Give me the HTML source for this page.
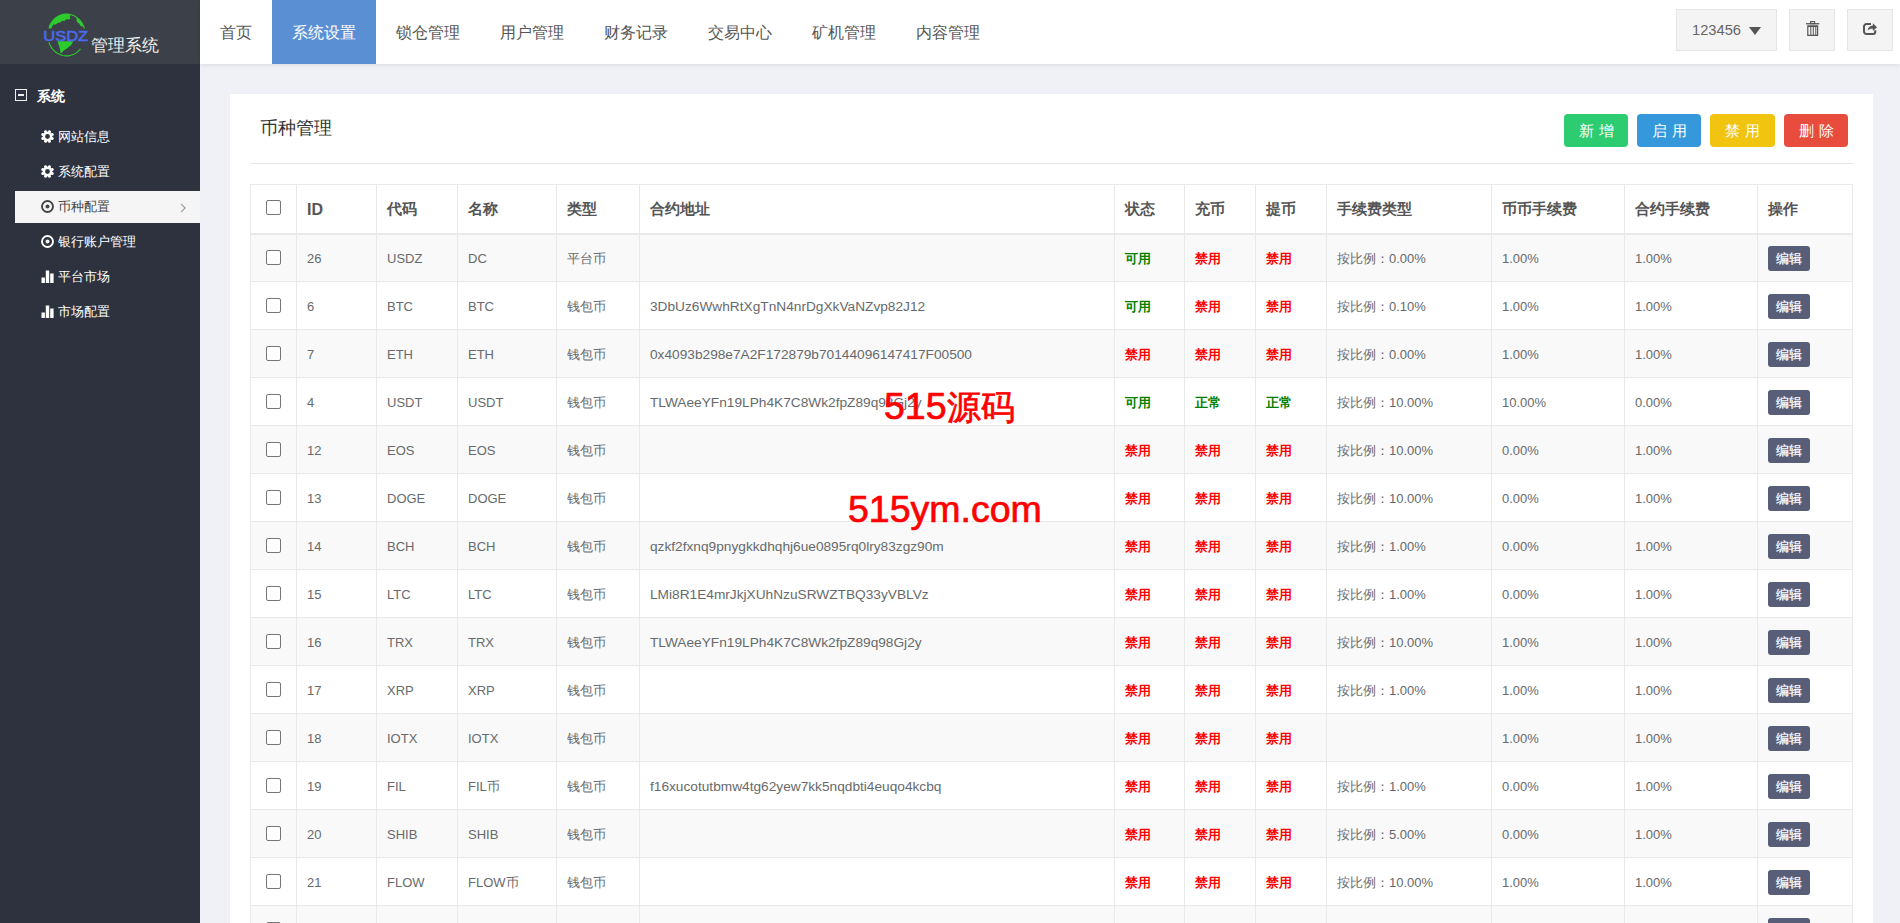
<!DOCTYPE html>
<html><head><meta charset="utf-8">
<style>
*{box-sizing:border-box;margin:0;padding:0}
html,body{width:1900px;height:923px;overflow:hidden}
body{font-family:"Liberation Sans",sans-serif;background:#f0f1f6;color:#676a6c;position:relative}
.logo{position:absolute;left:0;top:0;width:200px;height:64px;background:#3b4049}
.side{position:absolute;left:0;top:64px;width:200px;height:859px;background:#2d323e}
.nav{position:absolute;left:200px;top:0;width:1700px;height:64px;background:#fff;box-shadow:0 1px 5px rgba(0,0,0,.09)}
.nav a{position:absolute;top:0;height:64px;line-height:66px;font-size:16px;color:#555;text-decoration:none;text-align:center}
.nav a.on{background:#5b8fd4;color:#fff}
.card{position:absolute;left:230px;top:94px;width:1643px;height:900px;background:#fff}
.title{position:absolute;left:30px;top:22px;font-size:18px;color:#333}
.sep{position:absolute;left:20px;top:69px;width:1603px;height:1px;background:#e7eaec}
.btn{position:absolute;top:20px;height:33px;width:64px;border-radius:4px;color:#fff;font-size:15px;line-height:33px;text-align:center;letter-spacing:5px;text-indent:5px}
table{position:absolute;left:20px;top:90px;border-collapse:collapse;width:1602px;table-layout:fixed}
td,th{border:1px solid #e9e9e9;height:48px;padding:2px 10px 0;font-size:13px;text-align:left;white-space:nowrap;overflow:hidden}
th{height:49px;border-bottom:2px solid #e9e9e9;font-weight:bold;font-size:15px;color:#555}
tbody tr:nth-child(odd) td{background:#f9f9f9}
.cb{display:inline-block;width:15px;height:15px;border:1px solid #767676;border-radius:2px;vertical-align:middle;background:#fff;position:relative;top:-2px}
th .cb{top:-4px}
td.c0,th.c0{padding:2px 0 0 15px}
b.g{color:#008000;font-size:13px}
b.r{color:#f00;font-size:13px}
.eb{display:inline-block;width:42px;height:25px;line-height:27px;text-align:center;background:#585d78;color:#fff;border-radius:3px;font-size:12.5px;-webkit-text-stroke:0.25px #fff;position:relative;top:0px}
.grp{position:absolute;left:15px;top:24px;height:18px;color:#fff;font-size:14px}
.grp b{position:absolute;left:22px;top:0;white-space:nowrap}
.minus{position:absolute;left:0;top:1px;width:12px;height:12px;border:1.6px solid #eee}
.minus:after{content:"";position:absolute;left:1.5px;top:3.8px;width:6px;height:2px;background:#eee}
.it{position:absolute;left:15px;width:185px;height:32px;line-height:32px;color:#fff;font-size:13px;padding-left:43px;white-space:nowrap}
.it.on{background:#f5f5f5;color:#444}
.si{position:absolute;left:26px;top:9px}
.chev{position:absolute;left:165px;top:12px}
.user{position:absolute;left:1676px;top:9px;width:101px;height:42px;background:#f4f4f4;border:1px solid #e5e5e5;font-size:14.7px;color:#666;line-height:40px;padding-left:15px}
.tri{position:absolute;left:72px;top:17px;border-left:6px solid transparent;border-right:6px solid transparent;border-top:8px solid #555}
.ib{position:absolute;top:9px;width:46px;height:42px;background:#f4f4f4;border:1px solid #e5e5e5}
.wm1{position:absolute;left:884px;top:386px;font-size:37.5px;color:#f00;-webkit-text-stroke:0.7px #f00;white-space:nowrap;line-height:40px}
.wm2{position:absolute;left:848px;top:489px;font-size:37.5px;color:#f00;-webkit-text-stroke:0.7px #f00;white-space:nowrap;line-height:40px}
td.ad{font-size:13.7px}
</style></head><body>
<div class="logo">
<svg style="position:absolute;left:0;top:0" width="200" height="64" viewBox="0 0 200 64">
<polyline points="49.07,27.17 49.87,25.24 50.85,23.41 51.99,21.71 53.28,20.14 54.71,18.72 56.26,17.47 57.92,16.41 59.66,15.53 61.48,14.86 63.34,14.40 65.24,14.15 67.16,14.11 69.06,14.30 70.94,14.69 72.78,15.30 74.54,16.11 76.23,17.12 77.81,18.31 79.28,19.67 80.62,21.20 81.81,22.86 82.84,24.66 83.70,26.55 84.38,28.54" fill="none" stroke="#2ecb2e" stroke-width="1.1"/>
<polyline points="48.83,42.15 49.45,43.81 50.19,45.40 51.05,46.91 52.03,48.34 53.11,49.67 54.29,50.89 55.56,52.00 56.91,52.98 58.33,53.82 59.81,54.53 61.34,55.10 62.91,55.52 64.51,55.78 66.12,55.90 67.73,55.86 69.33,55.66 70.92,55.32 72.47,54.82 73.97,54.18 75.42,53.40 76.81,52.48 78.12,51.43 79.34,50.26 80.47,48.98" fill="none" stroke="#2ecb2e" stroke-width="1.1"/>
<g fill="#2ecb2e"><polygon points="48.62,28.54 49.09,27.10 49.66,25.71 50.32,24.36 51.06,23.07 51.89,21.85 52.80,20.69 53.77,19.62 54.82,18.62 55.93,17.71 57.10,16.90 58.32,16.18 59.58,15.57 60.88,15.06 62.21,14.65 63.56,14.36 64.93,14.17 66.30,14.10 67.68,14.14 69.05,14.29 70.41,14.56 69.80,17.20 70.60,18.80 68.60,19.60 66.40,19.20 64.40,20.90 62.20,20.70 60.20,22.40 57.80,22.90 55.60,24.60 53.60,24.50 52.20,26.20 51.30,28.60"/><polygon points="76.46,17.28 77.62,18.15 78.71,19.11 79.74,20.16 80.69,21.29 81.56,22.50 82.36,23.77 83.06,25.11 83.67,26.50 81.80,26.40 80.20,25.60 79.20,23.60 77.40,22.40 76.60,20.40"/><polygon points="57.40,41.30 73.20,41.30 71.60,44.60 67.60,48.10 63.80,50.40 62.00,52.60 60.50,53.40 60.10,49.60 58.90,45.60"/></g>
<text x="43.3" y="41" font-family="Liberation Sans" font-size="14.6" fill="#4a6af0" stroke="#4a6af0" stroke-width="0.55" textLength="44.8" lengthAdjust="spacingAndGlyphs">USDZ</text>
</svg>
<div style="position:absolute;left:90.5px;top:35.5px;font-size:16.6px;color:#f0f0f0;line-height:20px">管理系统</div>
</div>
<div class="side">
<div class="grp"><i class="minus"></i><b>系统</b></div>
<div class="it" style="top:57px"><svg class="si" width="13" height="13" viewBox="0 0 13 13"><path fill-rule="evenodd" fill="currentColor" d="M11.20 6.65 L12.94 7.96 L12.08 10.02 L9.93 9.71 L9.71 9.93 L10.02 12.08 L7.96 12.94 L6.65 11.20 L6.35 11.20 L5.04 12.94 L2.98 12.08 L3.29 9.93 L3.07 9.71 L0.92 10.02 L0.06 7.96 L1.80 6.65 L1.80 6.35 L0.06 5.04 L0.92 2.98 L3.07 3.29 L3.29 3.07 L2.98 0.92 L5.04 0.06 L6.35 1.80 L6.65 1.80 L7.96 0.06 L10.02 0.92 L9.71 3.07 L9.93 3.29 L12.08 2.98 L12.94 5.04 L11.20 6.35 Z M4.10 6.50 a2.4 2.4 0 1 0 4.8 0 a2.4 2.4 0 1 0 -4.8 0 Z"/></svg>网站信息</div>
<div class="it" style="top:92px"><svg class="si" width="13" height="13" viewBox="0 0 13 13"><path fill-rule="evenodd" fill="currentColor" d="M11.20 6.65 L12.94 7.96 L12.08 10.02 L9.93 9.71 L9.71 9.93 L10.02 12.08 L7.96 12.94 L6.65 11.20 L6.35 11.20 L5.04 12.94 L2.98 12.08 L3.29 9.93 L3.07 9.71 L0.92 10.02 L0.06 7.96 L1.80 6.65 L1.80 6.35 L0.06 5.04 L0.92 2.98 L3.07 3.29 L3.29 3.07 L2.98 0.92 L5.04 0.06 L6.35 1.80 L6.65 1.80 L7.96 0.06 L10.02 0.92 L9.71 3.07 L9.93 3.29 L12.08 2.98 L12.94 5.04 L11.20 6.35 Z M4.10 6.50 a2.4 2.4 0 1 0 4.8 0 a2.4 2.4 0 1 0 -4.8 0 Z"/></svg>系统配置</div>
<div class="it on" style="top:127px"><svg class="si" width="13" height="13" viewBox="0 0 13 13"><circle cx="6.5" cy="6.5" r="5.5" fill="none" stroke="currentColor" stroke-width="1.9"/><circle cx="6.5" cy="6.5" r="2" fill="currentColor"/></svg>币种配置<svg class="chev" width="8" height="12" viewBox="0 0 8 12"><path d="M1 0.8 L5.2 5 L1 9.2" fill="none" stroke="#999" stroke-width="1.1"/></svg></div>
<div class="it" style="top:162px"><svg class="si" width="13" height="13" viewBox="0 0 13 13"><circle cx="6.5" cy="6.5" r="5.5" fill="none" stroke="currentColor" stroke-width="1.9"/><circle cx="6.5" cy="6.5" r="2" fill="currentColor"/></svg>银行账户管理</div>
<div class="it" style="top:197px"><svg class="si" width="13" height="13" viewBox="0 0 13 13"><rect x="0.5" y="7.5" width="3.4" height="5.5" fill="currentColor"/><rect x="4.8" y="0.5" width="3.4" height="12.5" fill="currentColor"/><rect x="9.2" y="3.5" width="3.4" height="9.5" fill="currentColor"/></svg>平台市场</div>
<div class="it" style="top:232px"><svg class="si" width="13" height="13" viewBox="0 0 13 13"><rect x="0.5" y="7.5" width="3.4" height="5.5" fill="currentColor"/><rect x="4.8" y="0.5" width="3.4" height="12.5" fill="currentColor"/><rect x="9.2" y="3.5" width="3.4" height="9.5" fill="currentColor"/></svg>市场配置</div>
</div>
<div class="nav">
<a style="left:0;width:72px">首页</a>
<a class="on" style="left:72px;width:104px">系统设置</a>
<a style="left:176px;width:104px">锁仓管理</a>
<a style="left:280px;width:104px">用户管理</a>
<a style="left:384px;width:104px">财务记录</a>
<a style="left:488px;width:104px">交易中心</a>
<a style="left:592px;width:104px">矿机管理</a>
<a style="left:696px;width:104px">内容管理</a>
</div>
<div class="card">
<div class="title">币种管理</div>
<div class="btn" style="left:1334px;background:#2ecc71">新增</div>
<div class="btn" style="left:1407px;background:#3498db">启用</div>
<div class="btn" style="left:1480px;width:65px;background:#f1c40f">禁用</div>
<div class="btn" style="left:1554px;background:#e74c3c">删除</div>
<div class="sep"></div>
<table>
<colgroup><col style="width:46px"><col style="width:80px"><col style="width:81px"><col style="width:99px"><col style="width:83px"><col style="width:475px"><col style="width:70px"><col style="width:71px"><col style="width:71px"><col style="width:165px"><col style="width:133px"><col style="width:133px"><col style="width:95px"></colgroup>
<thead><tr><th class="c0"><i class="cb"></i></th><th style="font-size:16px">ID</th><th>代码</th><th>名称</th><th>类型</th><th>合约地址</th><th>状态</th><th>充币</th><th>提币</th><th>手续费类型</th><th>币币手续费</th><th>合约手续费</th><th>操作</th></tr></thead>
<tbody>
<tr><td class="c0"><i class="cb"></i></td><td>26</td><td>USDZ</td><td>DC</td><td>平台币</td><td class="ad"></td><td><b class="g">可用</b></td><td><b class="r">禁用</b></td><td><b class="r">禁用</b></td><td>按比例：0.00%</td><td>1.00%</td><td>1.00%</td><td><span class="eb">编辑</span></td></tr>
<tr><td class="c0"><i class="cb"></i></td><td>6</td><td>BTC</td><td>BTC</td><td>钱包币</td><td class="ad">3DbUz6WwhRtXgTnN4nrDgXkVaNZvp82J12</td><td><b class="g">可用</b></td><td><b class="r">禁用</b></td><td><b class="r">禁用</b></td><td>按比例：0.10%</td><td>1.00%</td><td>1.00%</td><td><span class="eb">编辑</span></td></tr>
<tr><td class="c0"><i class="cb"></i></td><td>7</td><td>ETH</td><td>ETH</td><td>钱包币</td><td class="ad">0x4093b298e7A2F172879b70144096147417F00500</td><td><b class="r">禁用</b></td><td><b class="r">禁用</b></td><td><b class="r">禁用</b></td><td>按比例：0.00%</td><td>1.00%</td><td>1.00%</td><td><span class="eb">编辑</span></td></tr>
<tr><td class="c0"><i class="cb"></i></td><td>4</td><td>USDT</td><td>USDT</td><td>钱包币</td><td class="ad">TLWAeeYFn19LPh4K7C8Wk2fpZ89q98Gj2y</td><td><b class="g">可用</b></td><td><b class="g">正常</b></td><td><b class="g">正常</b></td><td>按比例：10.00%</td><td>10.00%</td><td>0.00%</td><td><span class="eb">编辑</span></td></tr>
<tr><td class="c0"><i class="cb"></i></td><td>12</td><td>EOS</td><td>EOS</td><td>钱包币</td><td class="ad"></td><td><b class="r">禁用</b></td><td><b class="r">禁用</b></td><td><b class="r">禁用</b></td><td>按比例：10.00%</td><td>0.00%</td><td>1.00%</td><td><span class="eb">编辑</span></td></tr>
<tr><td class="c0"><i class="cb"></i></td><td>13</td><td>DOGE</td><td>DOGE</td><td>钱包币</td><td class="ad"></td><td><b class="r">禁用</b></td><td><b class="r">禁用</b></td><td><b class="r">禁用</b></td><td>按比例：10.00%</td><td>0.00%</td><td>1.00%</td><td><span class="eb">编辑</span></td></tr>
<tr><td class="c0"><i class="cb"></i></td><td>14</td><td>BCH</td><td>BCH</td><td>钱包币</td><td class="ad">qzkf2fxnq9pnygkkdhqhj6ue0895rq0lry83zgz90m</td><td><b class="r">禁用</b></td><td><b class="r">禁用</b></td><td><b class="r">禁用</b></td><td>按比例：1.00%</td><td>0.00%</td><td>1.00%</td><td><span class="eb">编辑</span></td></tr>
<tr><td class="c0"><i class="cb"></i></td><td>15</td><td>LTC</td><td>LTC</td><td>钱包币</td><td class="ad">LMi8R1E4mrJkjXUhNzuSRWZTBQ33yVBLVz</td><td><b class="r">禁用</b></td><td><b class="r">禁用</b></td><td><b class="r">禁用</b></td><td>按比例：1.00%</td><td>0.00%</td><td>1.00%</td><td><span class="eb">编辑</span></td></tr>
<tr><td class="c0"><i class="cb"></i></td><td>16</td><td>TRX</td><td>TRX</td><td>钱包币</td><td class="ad">TLWAeeYFn19LPh4K7C8Wk2fpZ89q98Gj2y</td><td><b class="r">禁用</b></td><td><b class="r">禁用</b></td><td><b class="r">禁用</b></td><td>按比例：10.00%</td><td>1.00%</td><td>1.00%</td><td><span class="eb">编辑</span></td></tr>
<tr><td class="c0"><i class="cb"></i></td><td>17</td><td>XRP</td><td>XRP</td><td>钱包币</td><td class="ad"></td><td><b class="r">禁用</b></td><td><b class="r">禁用</b></td><td><b class="r">禁用</b></td><td>按比例：1.00%</td><td>1.00%</td><td>1.00%</td><td><span class="eb">编辑</span></td></tr>
<tr><td class="c0"><i class="cb"></i></td><td>18</td><td>IOTX</td><td>IOTX</td><td>钱包币</td><td class="ad"></td><td><b class="r">禁用</b></td><td><b class="r">禁用</b></td><td><b class="r">禁用</b></td><td></td><td>1.00%</td><td>1.00%</td><td><span class="eb">编辑</span></td></tr>
<tr><td class="c0"><i class="cb"></i></td><td>19</td><td>FIL</td><td>FIL币</td><td>钱包币</td><td class="ad">f16xucotutbmw4tg62yew7kk5nqdbti4euqo4kcbq</td><td><b class="r">禁用</b></td><td><b class="r">禁用</b></td><td><b class="r">禁用</b></td><td>按比例：1.00%</td><td>0.00%</td><td>1.00%</td><td><span class="eb">编辑</span></td></tr>
<tr><td class="c0"><i class="cb"></i></td><td>20</td><td>SHIB</td><td>SHIB</td><td>钱包币</td><td class="ad"></td><td><b class="r">禁用</b></td><td><b class="r">禁用</b></td><td><b class="r">禁用</b></td><td>按比例：5.00%</td><td>0.00%</td><td>1.00%</td><td><span class="eb">编辑</span></td></tr>
<tr><td class="c0"><i class="cb"></i></td><td>21</td><td>FLOW</td><td>FLOW币</td><td>钱包币</td><td class="ad"></td><td><b class="r">禁用</b></td><td><b class="r">禁用</b></td><td><b class="r">禁用</b></td><td>按比例：10.00%</td><td>1.00%</td><td>1.00%</td><td><span class="eb">编辑</span></td></tr>
<tr><td class="c0"><i class="cb"></i></td><td>22</td><td></td><td></td><td></td><td class="ad"></td><td></td><td></td><td></td><td></td><td></td><td></td><td><span class="eb">编辑</span></td></tr>
</tbody>
</table>
</div>
<div class="user">123456<span class="tri"></span></div>
<div class="ib" style="left:1789px"><svg width="14" height="16" viewBox="0 0 14 16" style="position:absolute;left:16px;top:11px"><rect x="4.6" y="0.6" width="4" height="2" fill="none" stroke="#555" stroke-width="1.1"/><rect x="0" y="2.1" width="13.3" height="1.3" fill="#555"/><path fill="#555" fill-rule="evenodd" d="M1.2 4.2 H12.2 V15 H1.2 Z M2.4 5.9 V13.8 H4.3 V5.9 Z M5.3 5.9 V13.8 H6.8 V5.9 Z M7.8 5.9 V13.8 H9.3 V5.9 Z M10.3 5.9 V13.8 H11 V5.9 Z"/></svg></div>
<div class="ib" style="left:1847px"><svg width="15" height="13" viewBox="0 0 15 13" style="position:absolute;left:15px;top:13px"><path fill="none" stroke="#555" stroke-width="2" d="M8 1 H3.5 A2.5 2.5 0 0 0 1 3.5 V8.5 A2.5 2.5 0 0 0 3.5 11 H9.8 A2.5 2.5 0 0 0 12.3 8.5 V7.2"/><path fill="#555" d="M9.9 0.3 L14 4.2 L9.9 7.9 V5.7 C7.5 5.6 5.8 6.2 4.4 7.6 C5 4.6 7 2.7 9.9 2.5 Z"/></svg></div>
<div class="wm1">515<span style="font-size:34px">源码</span></div>
<div class="wm2">515ym.com</div>
</body></html>
